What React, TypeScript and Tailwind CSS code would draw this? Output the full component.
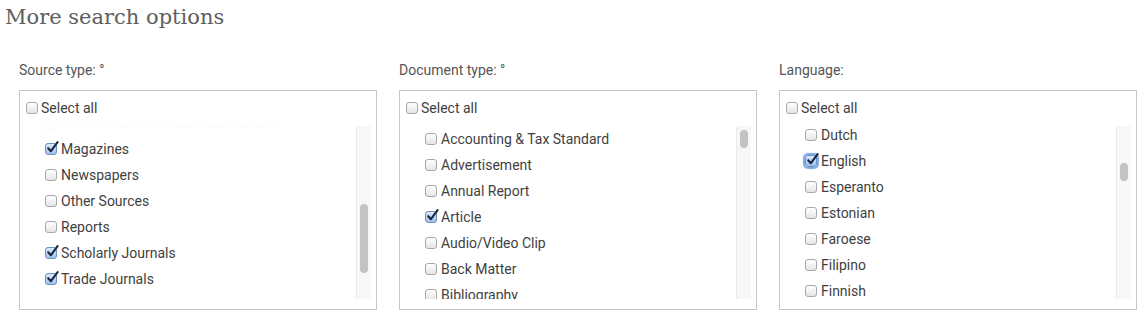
import React from 'react';

type Item = { label: string; checked?: boolean; focus?: boolean };

const sourceTypes: Item[] = [
  { label: 'Blogs, Podcasts & Websites' },
  { label: 'Books' },
  { label: 'Conference Papers & Proceedings' },
  { label: 'Dissertations & Theses' },
  { label: 'Encyclopedias & Reference Works' },
  { label: 'Government & Official Publications' },
  { label: 'Magazines', checked: true },
  { label: 'Newspapers' },
  { label: 'Other Sources' },
  { label: 'Reports' },
  { label: 'Scholarly Journals', checked: true },
  { label: 'Trade Journals', checked: true },
  { label: 'Wire Feeds' },
];

const documentTypes: Item[] = [
  { label: 'Accounting & Tax Standard' },
  { label: 'Advertisement' },
  { label: 'Annual Report' },
  { label: 'Article', checked: true },
  { label: 'Audio/Video Clip' },
  { label: 'Back Matter' },
  { label: 'Bibliography' },
  { label: 'Biography' },
  { label: 'Book' },
];

const languages: Item[] = [
  { label: 'Afrikaans' },
  { label: 'Albanian' },
  { label: 'Arabic' },
  { label: 'Armenian' },
  { label: 'Basque' },
  { label: 'Bengali' },
  { label: 'Bulgarian' },
  { label: 'Catalan' },
  { label: 'Chinese' },
  { label: 'Croatian' },
  { label: 'Czech' },
  { label: 'Danish' },
  { label: 'Dutch' },
  { label: 'English', checked: true, focus: true },
  { label: 'Esperanto' },
  { label: 'Estonian' },
  { label: 'Faroese' },
  { label: 'Filipino' },
  { label: 'Finnish' },
  { label: 'French' },
];

function Checkbox({ checked, focus }: { checked?: boolean; focus?: boolean }) {
  return (
    <span
      className={
        'relative w-[12px] h-[12px] shrink-0 rounded-[3px] border ' +
        (checked
          ? 'border-[#6f8fbf] bg-gradient-to-b from-[#dbe9fb] to-[#9fc2ee] '
          : 'border-[#a8a8a8] bg-gradient-to-b from-white to-[#e6e6e6] ') +
        (focus ? 'shadow-[0_0_1px_2px_rgba(80,140,220,0.75)]' : '')
      }
    >
      {checked && (
        <svg className="absolute -top-[3px] left-[0px]" width="13" height="13" viewBox="0 0 13 13">
          <path d="M2.2 7.2 L4.9 10.2 L11.6 1.2" fill="none" stroke="#1c2740" strokeWidth="2.1" strokeLinecap="round" strokeLinejoin="round" />
        </svg>
      )}
    </span>
  );
}

function OptionBox({
  label,
  items,
  offsetClass,
  thumbClass,
  fadeTop,
}: {
  label: string;
  items: Item[];
  offsetClass: string;
  thumbClass: string;
  fadeTop?: boolean;
}) {
  return (
    <div className="w-[358px] flex flex-col">
      <div className="h-[22px] text-[14px] leading-[22px] text-[#555]">{label}</div>
      <div className="mt-[9px] h-[220px] border border-[#c6c6c6] pt-[4px] pl-[6px] pr-[5px] flex flex-col">
        <label className="h-[26px] flex items-center gap-[3px] text-[14px] text-[#3f3f3f]">
          <Checkbox />
          <span>Select all</span>
        </label>
        {/* liste défilante */}
        <div className="mt-[5px] h-[173px] flex">
          <div className="relative flex-1 overflow-hidden">
            <div className={offsetClass}>
              {items.map((item) => (
                <div key={item.label} className="h-[26px] pl-[19px] flex items-center gap-[4px] text-[14px] text-[#3f3f3f] whitespace-nowrap">
                  <Checkbox checked={item.checked} focus={item.focus} />
                  <span>{item.label}</span>
                </div>
              ))}
            </div>
            {fadeTop && (
              <div className="absolute top-0 left-0 right-0 h-[9px] bg-gradient-to-b from-white via-white/90 to-white/0" />
            )}
          </div>
          <div className="w-[15px] bg-[#f7f7f7] border-l border-[#ebebeb] relative">
            <div className={'absolute left-[3px] w-[8px] rounded-full bg-[#c3c3c3] ' + thumbClass} />
          </div>
        </div>
      </div>
    </div>
  );
}

export default function App() {
  return (
    <div className="w-[1148px] h-[323px] bg-white overflow-hidden font-['Roboto',sans-serif]">
      <h2 className="pl-[5px] pt-[2px] h-[30px] text-[21px] leading-[30px] text-[#5e5e5e] font-['DejaVu_Serif',serif]">
        More search options
      </h2>
      <div className="mt-[29px] pl-[19px] flex gap-[22px]">
        <OptionBox label="Source type: °" items={sourceTypes} offsetClass="-mt-[146px]" thumbClass="top-[78px] h-[69px]" fadeTop />
        <OptionBox label="Document type: °" items={documentTypes} offsetClass="mt-0" thumbClass="top-[4px] h-[18px]" />
        <OptionBox label="Language:" items={languages} offsetClass="-mt-[316px]" thumbClass="top-[37px] h-[18px]" />
      </div>
    </div>
  );
}
